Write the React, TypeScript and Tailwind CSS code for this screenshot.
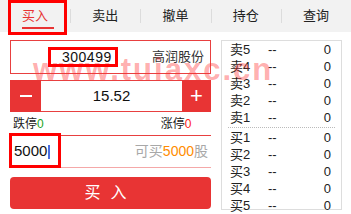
const tabs = ["买入", "卖出", "撤单", "持仓", "查询"];
const sells = ["卖5", "卖4", "卖3", "卖2", "卖1"];
const buys = ["买1", "买2", "买3", "买4", "买5"];

function QuoteRow({ label }: { label: string }) {
  return (
    <div className="flex h-[17px] items-center pl-[8px] pr-[10px] text-[13px] text-[#222]">
      <span className="w-[38px]">{label}</span>
      <span className="flex-1">--</span>
      <span>0</span>
    </div>
  );
}

export default function App() {
  return (
    <div
      className="relative h-[214px] w-[351px] overflow-hidden bg-white"
      style={{ fontFamily: '"Liberation Sans", "Noto Sans CJK SC", sans-serif' }}
    >
      {/* tab bar */}
      <div className="flex h-[32px] bg-[#f2f2f2]">
        {tabs.map((t, i) => (
          <div key={t} className="relative flex flex-1 items-center justify-center">
            <span className={`text-[13px] ${i === 0 ? "text-[#e83434]" : "text-[#222]"}`}>{t}</span>
            {i === 0 && <div className="absolute bottom-[3px] left-[22px] h-[2px] w-[32px] bg-[#e83434]" />}
            {i > 0 && <div className="absolute left-0 top-[9px] h-[14px] w-px bg-[#dcdcdc]" />}
          </div>
        ))}
      </div>

      <div className="flex pt-[8px]">
        {/* left form */}
        <div className="ml-[10px] flex w-[201px] flex-col">
          <div className="flex h-[34px] items-center border border-[#e84040] pr-[6px]">
            <span className="ml-[51px] text-[14px] tracking-[0.5px] text-[#111]">300499</span>
            <span className="ml-auto text-[13px] text-[#333]">高润股份</span>
          </div>

          <div className="mt-[6px] flex h-[32px]">
            <div className="flex w-[31px] items-center justify-center bg-[#e83434]">
              <div className="h-[2px] w-[12px] bg-white" />
            </div>
            <div className="flex flex-1 items-center justify-center border-y border-[#e84040] text-[15px] text-[#111]">
              15.52
            </div>
            <div className="flex w-[29px] items-center justify-center bg-[#e83434] text-[22px] leading-none text-white">
              +
            </div>
          </div>

          <div className="flex h-[23px] items-center pl-[3px] text-[12px] text-[#222]">
            <span>跌停<span className="text-[#19a319]">0</span></span>
            <span className="ml-[117px]">涨停<span className="text-[#ff2020]">0</span></span>
          </div>

          <div className="flex h-[33px] items-center border-b border-t border-b-[#f5a8a8] border-t-[#e84040] pl-[4px] pr-[3px]">
            <span className="text-[15px] text-[#111]">5000</span>
            <span className="ml-px h-[14px] w-[2px] bg-[#4a6ee0]" />
            <span className="ml-auto text-[14px] text-[#a8a8a8]">
              可买<span className="text-[#ff8c00]">5000</span>股
            </span>
          </div>

          <button className="mt-[9px] flex h-[32px] items-center justify-center rounded-[4px] bg-[#e83434] text-[16px] tracking-[10px] text-white">
            买入
          </button>
        </div>

        {/* right quotes */}
        <div className="ml-[10px] flex h-[170px] w-[121px] flex-col border border-[#dddddd]">
          {sells.map((s) => (
            <QuoteRow key={s} label={s} />
          ))}
          <div className="mx-[6px] my-[1px] border-t border-dotted border-[#bbbbbb]" />
          {buys.map((s) => (
            <QuoteRow key={s} label={s} />
          ))}
        </div>
      </div>

      {/* watermark */}
      <div className="pointer-events-none absolute left-[33px] top-[54px] text-[31px] font-bold leading-none tracking-[2px] text-[#ff3030]/40">
        www.tuiaxc.cn
      </div>

      {/* annotation boxes */}
      <div className="pointer-events-none absolute left-[8px] top-0 h-[35px] w-[59px] border-[3px] border-[#ff0000]" />
      <div className="pointer-events-none absolute left-[48px] top-[47px] h-[20px] w-[70px] border-[3px] border-[#ff0000]" />
      <div className="pointer-events-none absolute left-[9px] top-[133px] h-[35px] w-[52px] border-[3px] border-[#ff0000]" />
    </div>
  );
}
